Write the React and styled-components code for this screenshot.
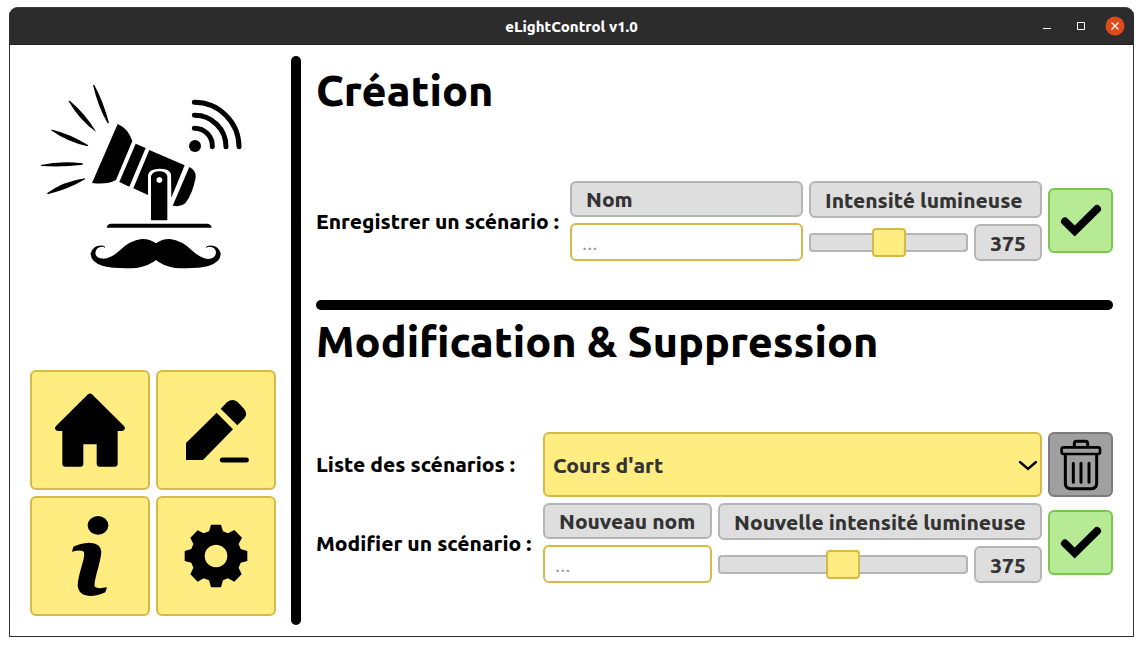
import React, { useState } from "react";
import styled, { createGlobalStyle } from "styled-components";

const GlobalStyle = createGlobalStyle`
  *, *::before, *::after { box-sizing: border-box; }
  body {
    margin: 0;
    background: #fff;
    color: #000;
    font-family: Ubuntu, "Noto Sans", "Open Sans", sans-serif;
  }
  button, input, select, output { font: inherit; color: inherit; }
`;

const Window = styled.div`
  display: flex;
  flex-direction: column;
  margin: 7px 9px 9px;
  min-height: calc(100vh - 16px);
  border: 1px solid #323232;
  border-top: 0;
  border-radius: 9px 9px 0 0;
`;

const TitleBar = styled.header`
  display: grid;
  grid-template-columns: 1fr auto 1fr;
  align-items: center;
  height: 38px;
  margin: 0 -1px;
  padding: 0 9px;
  background: #2c2c2c;
  border-top: 1px solid #3c3c3c;
  border-bottom: 1px solid #222;
  border-radius: 9px 9px 0 0;
  color: #fff;
`;

const WindowTitle = styled.span`
  grid-column: 2;
  padding-top: 2px;
  font-size: 15px;
  line-height: 20px;
  font-weight: 800;
`;

const WindowControls = styled.div`
  display: flex;
  justify-content: flex-end;
  gap: 14px;
`;

const ControlButton = styled.button`
  width: 20px;
  height: 20px;
  padding: 0;
  border: 0;
  background: none;
  svg { display: block; }
`;

const Body = styled.div`
  flex: 1;
  display: grid;
  grid-template-columns: auto 10px minmax(0, 1fr);
  gap: 15px;
  padding: 11px 20px;
`;

const Sidebar = styled.aside`
  display: flex;
  flex-direction: column;
  justify-content: space-between;
  padding: 14px 0 9px;
`;

const NavGrid = styled.nav`
  display: grid;
  grid-template-columns: repeat(2, 120px);
  gap: 6px;
`;

const NavButton = styled.button`
  height: 120px;
  padding: 0;
  background: #ffed82;
  border: 2px solid #d7b94a;
  border-radius: 6px;
  svg { display: block; }
`;

const Divider = styled.div`
  min-height: 10px;
  background: #000;
  border-radius: 5px;
`;

const Section = styled.section`
  padding: ${(p) => (p.$first ? "9px 0 39px" : "6px 0 0")};
`;

const Heading = styled.h1`
  margin: 0 0 66px;
  font-size: 43px;
  line-height: 50px;
  font-weight: 800;
`;

const Row = styled.div`
  display: grid;
  grid-template-columns: ${(p) => p.$label}px minmax(0, 1fr) 65px;
  gap: 6px;
  align-items: center;
  & + & { margin-top: 6px; }
`;

const RowLabel = styled.label`
  font-size: 21px;
  line-height: 24px;
  padding-bottom: 1px;
  font-weight: 800;
  white-space: nowrap;
`;

const Fields = styled.div`
  display: grid;
  grid-template-columns: ${(p) => p.$columns};
  gap: 6px;
`;

const Field = styled.div`
  display: grid;
  grid-template-rows: ${(p) => p.$rows};
  gap: 6px;
`;

const Tag = styled.label`
  display: flex;
  align-items: center;
  padding: 0 14px;
  background: #dedede;
  border: 2px solid #b5b5b5;
  border-radius: 6px;
  color: #333;
  font-size: 21px;
  line-height: 26px;
  font-weight: 800;
  white-space: nowrap;
`;

const TextInput = styled.input`
  width: 100%;
  min-width: 0;
  padding: 0 10px;
  background: #fff;
  border: 2px solid #d7b94a;
  border-radius: 6px;
  font-size: 21px;
  line-height: 26px;
  &::placeholder { color: #999; opacity: 1; }
`;

const SliderRow = styled.div`
  display: grid;
  grid-template-columns: minmax(0, 1fr) 68px;
  gap: 6px;
`;

const Slider = styled.input`
  appearance: none;
  width: 100%;
  height: 100%;
  margin: 0;
  background: none;
  &::-webkit-slider-runnable-track {
    height: 19px;
    background: #dedede;
    border-radius: 4px;
    box-shadow: inset 0 0 0 2px #b5b5b5;
  }
  &::-webkit-slider-thumb {
    appearance: none;
    width: 34px;
    height: 29px;
    margin-top: -5px;
    background: #ffed82;
    border: 2px solid #d7b94a;
    border-radius: 4px;
  }
`;

const SliderValue = styled.output`
  display: flex;
  align-items: center;
  justify-content: center;
  background: #dedede;
  border: 2px solid #b5b5b5;
  border-radius: 6px;
  color: #333;
  font-size: 21px;
  line-height: 26px;
  font-weight: 800;
`;

const tones = {
  confirm: { bg: "#b7ea94", edge: "#7ac74f", below: "1px" },
  remove: { bg: "#a0a0a0", edge: "#7c7c7c", below: "0" },
};

const ActionButton = styled.button`
  height: 65px;
  margin: 0 0 ${(p) => tones[p.$tone].below};
  padding: 0;
  background: ${(p) => tones[p.$tone].bg};
  border: 2px solid ${(p) => tones[p.$tone].edge};
  border-radius: 6px;
  svg { display: block; }
`;

const SelectBox = styled.div`
  display: grid;
  align-items: center;
  > * { grid-area: 1 / 1; }
  svg { justify-self: end; margin-right: 4px; pointer-events: none; }
`;

const Select = styled.select`
  appearance: none;
  width: 100%;
  height: 65px;
  padding: 0 30px 0 8px;
  background: #ffed82;
  border: 2px solid #d7b94a;
  border-radius: 6px;
  color: #333;
  font-size: 21px;
  font-weight: 800;
`;

const Logo = () => (
  <svg width="246" height="210" viewBox="30 0 738 630" role="img" aria-label="eLightControl">
    <path d="M219 44L223 45Q250 95 267 159L263 160Q233 108 219 44ZM145 92L150 93Q193 128 229 186Q178 150 145 92ZM92 180L97 179Q152 192 205 226L203 229Q143 216 92 180ZM62 285Q120 272 188 280L188 284Q130 292 64 288ZM81 370Q130 334 195 325L195 328Q145 358 83 373Z" />
    <path d="M293 162Q325 176 337 213L288 330Q262 345 216 339Z" />
    <path d="M347 221L377 234L328 350L298 336Z" />
    <path d="M388 240L494 286L454 383L453 312Q448 296 419 296Q388 296 384 315V375L340 355Z" />
    <path d="M508 291Q530 302 527 323Q518 370 496 400Q482 412 458 407Z" />
    <path fillRule="evenodd" d="M393 451V318Q398 304 418 304Q438 304 442 318V451ZM418 321a9 9 0 1 0 .1 0Z" />
    <path d="M260 473Q262 461 274 461H562Q574 462 575 473Z" />
    <circle cx="525" cy="228" r="18" />
    <path d="M523 175A53 53 0 0 1 577 230M523 136A94 94 0 0 1 618 230M523 97A134 134 0 0 1 657 230" fill="none" stroke="#000" strokeWidth="15" strokeLinecap="round" />
    <path d="M408 520Q388 506 365 507Q330 511 298 542Q273 565 251 566Q227 566 226 548Q229 529 248 530Q252 530 255 534Q257 529 250 527Q220 523 212 550Q211 576 249 588Q285 597 350 594Q390 586 408 570Q425 586 465 594Q530 597 565 588Q603 576 602 550Q594 523 565 527Q557 529 559 534Q563 530 568 530Q588 531 588 548Q586 566 565 567Q542 565 517 542Q485 511 450 507Q427 506 408 520Z" />
  </svg>
);

const HomeIcon = () => (
  <svg width="116" height="116" viewBox="36 36 348 348" aria-hidden="true">
    <path d="M204 103Q210 98 216 103L312 198Q317 203 314 208Q311 213 305 213H293V311Q293 320 284 320H240Q230 320 230 311V253H190V311Q190 320 181 320H136Q127 320 127 311V213H115Q108 213 105 207Q104 203 108 198Z" />
  </svg>
);

const PencilIcon = () => (
  <svg width="116" height="116" viewBox="414 36 348 348" aria-hidden="true">
    <path d="M590 158L639 208L549 300H498V249Z" />
    <path d="M602 146L621 127Q636 114 652 125L672 146Q684 161 673 175L652 196Z" />
    <path d="M607 300H679" stroke="#000" strokeWidth="15" strokeLinecap="round" />
  </svg>
);

const InfoIcon = () => (
  <svg width="116" height="116" viewBox="36 414 348 348" aria-hidden="true">
    <ellipse cx="234" cy="496" rx="31" ry="28" />
    <path d="M156 575L160 560Q180 549 208 548Q243 549 244 576Q242 599 230 640Q222 671 224 679Q229 688 261 682L256 697Q235 708 209 708Q174 705 173 675Q174 655 186 615Q194 590 192 576Q187 567 156 575Z" />
  </svg>
);

const GearIcon = () => (
  <svg width="116" height="116" viewBox="414 414 348 348" aria-hidden="true">
    <path fillRule="evenodd" d="M573 494H603L609 514L624 520L643 510L666 533L656 552L662 567L682 573V603L662 608L656 623L665 643L643 665L624 655L609 661L603 682H573L567 661L551 655L533 665L511 643L520 623L514 608L494 603V573L514 567L520 552L511 533L533 511L551 520L567 514ZM588 554a34 34 0 1 0 .1 0Z" />
  </svg>
);

const CheckIcon = () => (
  <svg width="61" height="61" viewBox="2 2 61 61" aria-hidden="true">
    <path d="M17 33.500L26.700 43L49 21" fill="none" stroke="#000" strokeWidth="8" strokeLinecap="round" />
  </svg>
);

const TrashIcon = () => (
  <svg width="61" height="61" viewBox="990 42 183 183" fill="none" stroke="#000" strokeLinecap="round" strokeLinejoin="round" aria-hidden="true">
    <rect x="1025" y="82" width="115" height="20" rx="6" strokeWidth="8" />
    <path d="M1063 81V71Q1063 64 1070 64H1096Q1103 64 1103 71V81M1036 104V190Q1036 206 1051 206H1115Q1130 206 1130 190V104" strokeWidth="9" />
    <path d="M1060 130V187M1083 130V187M1107 130V187" strokeWidth="9" />
  </svg>
);

const Chevron = () => (
  <svg width="20" height="12" viewBox="0 0 20 12" aria-hidden="true">
    <path d="M2 3L10 10L18 3" fill="none" stroke="#000" strokeWidth="2.400" strokeLinecap="round" />
  </svg>
);

function ScenarioFields({ id, columns, nameLabel, levelLabel }) {
  const [level, setLevel] = useState(375);
  return (
    <Fields $columns={columns}>
      <Field $rows="36px 38px">
        <Tag htmlFor={`${id}-name`}>{nameLabel}</Tag>
        <TextInput id={`${id}-name`} type="text" placeholder="..." />
      </Field>
      <Field $rows="37px 37px">
        <Tag htmlFor={`${id}-level`}>{levelLabel}</Tag>
        <SliderRow>
          <Slider
            id={`${id}-level`}
            type="range"
            min="0"
            max="750"
            value={level}
            onChange={(e) => setLevel(Number(e.target.value))}
          />
          <SliderValue htmlFor={`${id}-level`}>{level}</SliderValue>
        </SliderRow>
      </Field>
    </Fields>
  );
}

export default function App() {
  return (
    <>
      <GlobalStyle />
      <Window>
        <TitleBar>
          <WindowTitle>eLightControl v1.0</WindowTitle>
          <WindowControls>
            <ControlButton aria-label="Réduire">
              <svg width="20" height="20"><path d="M6 12h8v1H6z" fill="#fff" /></svg>
            </ControlButton>
            <ControlButton aria-label="Agrandir">
              <svg width="20" height="20"><path d="M6.500 6.500h7v7h-7z" fill="none" stroke="#fff" /></svg>
            </ControlButton>
            <ControlButton aria-label="Fermer">
              <svg width="20" height="20">
                <circle cx="10" cy="10" r="9.500" fill="#e04a18" />
                <path d="M6.500 6.500l7 7M13.500 6.500l-7 7" stroke="#fff" strokeWidth="1.300" />
              </svg>
            </ControlButton>
          </WindowControls>
        </TitleBar>
        <Body>
          <Sidebar>
            <Logo />
            <NavGrid>
              <NavButton aria-label="Accueil"><HomeIcon /></NavButton>
              <NavButton aria-label="Édition"><PencilIcon /></NavButton>
              <NavButton aria-label="Informations"><InfoIcon /></NavButton>
              <NavButton aria-label="Paramètres"><GearIcon /></NavButton>
            </NavGrid>
          </Sidebar>
          <Divider />
          <main>
            <Section $first>
              <Heading>Création</Heading>
              <Row $label={248}>
                <RowLabel htmlFor="create-name">Enregistrer un scénario :</RowLabel>
                <ScenarioFields id="create" columns="1fr 1fr" nameLabel="Nom" levelLabel="Intensité lumineuse" />
                <ActionButton $tone="confirm" aria-label="Enregistrer"><CheckIcon /></ActionButton>
              </Row>
            </Section>
            <Divider />
            <Section>
              <Heading>Modification &amp; Suppression</Heading>
              <Row $label={221}>
                <RowLabel htmlFor="scenario-list">Liste des scénarios :</RowLabel>
                <SelectBox>
                  <Select id="scenario-list"><option>Cours d'art</option></Select>
                  <Chevron />
                </SelectBox>
                <ActionButton $tone="remove" aria-label="Supprimer"><TrashIcon /></ActionButton>
              </Row>
              <Row $label={221}>
                <RowLabel htmlFor="edit-name">Modifier un scénario :</RowLabel>
                <ScenarioFields id="edit" columns="12fr 23fr" nameLabel="Nouveau nom" levelLabel="Nouvelle intensité lumineuse" />
                <ActionButton $tone="confirm" aria-label="Modifier"><CheckIcon /></ActionButton>
              </Row>
            </Section>
          </main>
        </Body>
      </Window>
    </>
  );
}
